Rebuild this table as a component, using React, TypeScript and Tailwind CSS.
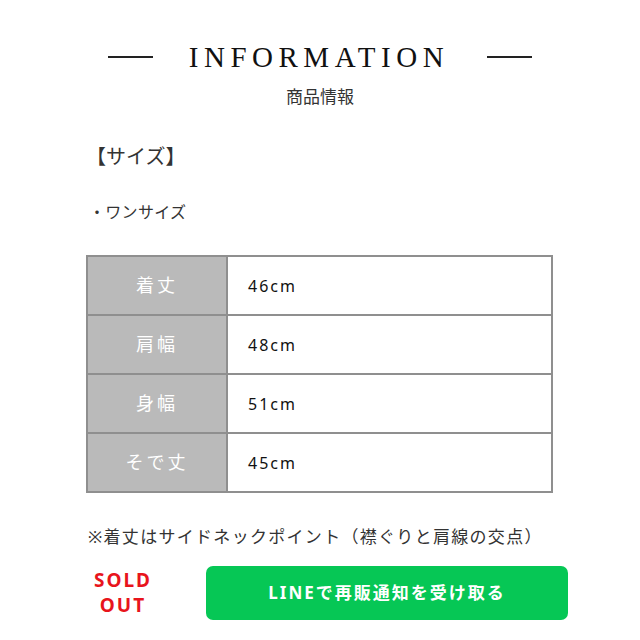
const jp = "font-['Noto_Sans','Noto_Sans_CJK_JP',sans-serif]";

const rows = [
  { label: "着丈", value: "46cm" },
  { label: "肩幅", value: "48cm" },
  { label: "身幅", value: "51cm" },
  { label: "そで丈", value: "45cm" },
];

function Heading() {
  return (
    <div className="flex flex-col items-center">
      <div className="flex items-center">
        <span className="h-[1.5px] w-[45px] bg-[#222]" />
        <h1 className="ml-[36px] mr-[38px] font-['Liberation_Serif',serif] text-[29px] leading-[36px] font-normal tracking-[5.5px] text-[#111]">
          INFORMATION
        </h1>
        <span className="h-[1.5px] w-[45px] bg-[#222]" />
      </div>
      <p className={`mt-[11px] text-[17px] leading-[22px] text-[#333] ${jp}`}>
        商品情報
      </p>
    </div>
  );
}

function SizeTable() {
  return (
    <table className="w-[467px] border-collapse border-2 border-[#8f8f8f]">
      <tbody>
        {rows.map((row) => (
          <tr key={row.label} className="h-[59px]">
            <td className="w-[140px] border-2 border-[#8f8f8f] bg-[#bababa] text-center text-[18px] tracking-[3px] text-white">
              <span className={jp}>{row.label}</span>
            </td>
            <td className="border-2 border-[#8f8f8f] bg-white pl-[20px] text-[16px] tracking-[2px] text-[#111]">
              <span className={jp}>{row.value}</span>
            </td>
          </tr>
        ))}
      </tbody>
    </table>
  );
}

export default function App() {
  return (
    <div className={`h-[640px] w-[640px] overflow-hidden bg-white ${jp}`}>
      <div className="pt-[39px]">
        <Heading />
      </div>
      <div className="pl-[86px]">
        <p className="mt-[35px] text-[20px] leading-[28px] text-[#333]">
          【サイズ】
        </p>
        <p className="mt-[29px] pl-[3px] text-[16px] leading-[24px] tracking-[0.3px] text-[#333]">
          ・ワンサイズ
        </p>
        <div className="mt-[31px]">
          <SizeTable />
        </div>
        <p className="mt-[32px] pl-[2px] text-[17px] leading-[24px] tracking-[1.3px] text-[#333]">
          ※着丈はサイドネックポイント（襟ぐりと肩線の交点）
        </p>
        <div className="mt-[17px] flex items-center">
          <div className="w-[120px] pl-[8px] text-center font-bold text-[19px] leading-[25px] tracking-[2px] text-[#e8141c]">
            <div className="w-[58px]">SOLD</div>
            <div className="w-[58px]">OUT</div>
          </div>
          <button className="flex h-[54px] w-[362px] items-center justify-center rounded-[7px] bg-[#06c755] text-[17px] font-bold tracking-[2px] text-white">
            LINEで再販通知を受け取る
          </button>
        </div>
      </div>
    </div>
  );
}
